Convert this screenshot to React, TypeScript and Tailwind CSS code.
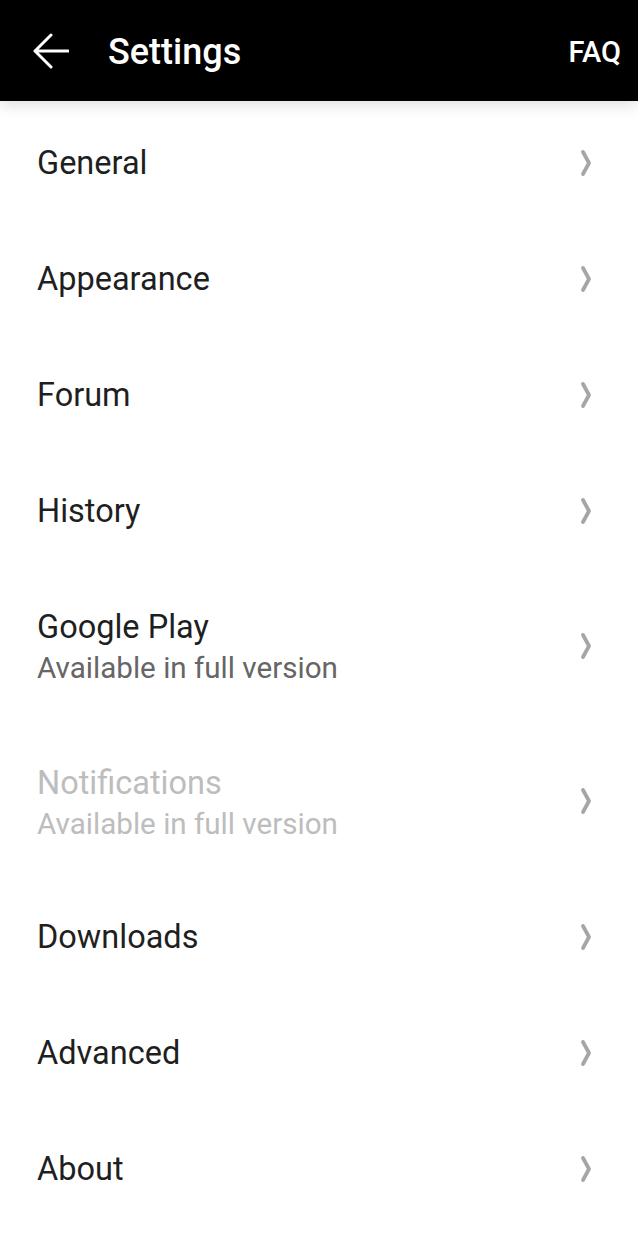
import React from "react";

const Chevron = () => (
  <svg width="12" height="28" viewBox="0 0 12 28" className="shrink-0">
    <path d="M3 3 L9 14 L3 25" fill="none" stroke="#a6a6a6" strokeWidth="3.8" strokeLinecap="round" strokeLinejoin="round" />
  </svg>
);

type Item = { title: string; sub?: string; disabled?: boolean; h: string; mt?: string };

const items: Item[] = [
  { title: "General", h: "h-[116px]" },
  { title: "Appearance", h: "h-[116px]" },
  { title: "Forum", h: "h-[116px]" },
  { title: "History", h: "h-[116px]" },
  { title: "Google Play", sub: "Available in full version", h: "h-[154px]", mt: "mt-[4px]" },
  { title: "Notifications", sub: "Available in full version", disabled: true, h: "h-[156px]", mt: "mt-[6px]" },
  { title: "Downloads", h: "h-[116px]" },
  { title: "Advanced", h: "h-[116px]" },
  { title: "About", h: "h-[116px]" },
];

export default function App() {
  return (
    <div className="w-[638px] h-[1252px] bg-white overflow-hidden flex flex-col" style={{ fontFamily: "Roboto, 'Noto Sans', sans-serif" }}>
      <div className="relative z-10 h-[101px] bg-black flex items-center pt-[3px] shrink-0 shadow-[0_4px_14px_rgba(0,0,0,0.13)]">
        <svg width="36" height="36" viewBox="0 0 36 36" className="ml-[33px] shrink-0 -mt-[3px]">
          <path d="M2 18 H35 M18 2 L2 18 L18 34" fill="none" stroke="white" strokeWidth="3" strokeLinecap="round" strokeLinejoin="round" />
        </svg>
        <div className="ml-[39px] text-white text-[36px] font-medium leading-none">Settings</div>
        <div className="ml-auto mr-[17px] text-white text-[29px] font-medium leading-none">FAQ</div>
      </div>
      <div className="pt-[4px] flex flex-col">
        {items.map((it) => (
          <div key={it.title} className={`${it.h} flex items-center pl-[37px] pr-[46px]`}>
            <div className={`flex-1 flex flex-col ${it.mt ?? ""}`}>
              <div className={`text-[32.5px] leading-[40px] ${it.disabled ? "text-[#bdbdbd]" : "text-[#1f1f1f]"}`}>{it.title}</div>
              {it.sub && (
                <div className={`text-[29.6px] leading-[42px] ${it.disabled ? "text-[#bdbdbd]" : "text-[#666666]"}`}>{it.sub}</div>
              )}
            </div>
            <Chevron />
          </div>
        ))}
      </div>
    </div>
  );
}
